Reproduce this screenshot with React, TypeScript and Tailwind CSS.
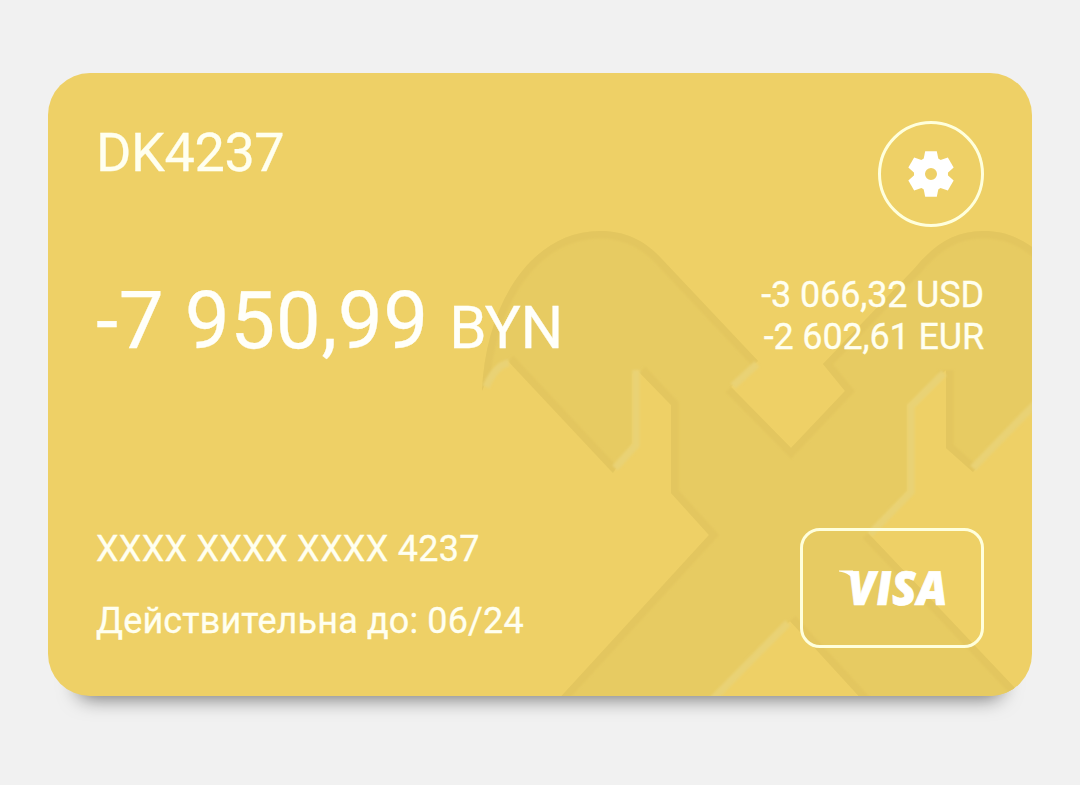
const shape =
  "M482 391 C486 303 532 231 600 231 C625 231 643 240 659 256 L758 361 L731 387 L791 448 L845 391 L823 364 L914 269 C934 245 954 231 983 231 C1004 231 1020 237 1040 253 L1040 400 L973 472 L946 448 L946 370 L907 405 L907 491 L868 533 L1030 704 L866 704 L790 621 L709 702 L556 702 L709 535 L671 493 L671 405 L637 370 L632 374 L632 443 L613 473 L508 361 C498 361 490 372 482 391 Z";

const Pattern = () => {
  return (
    <svg
      viewBox="48 73 984 623"
      className="absolute inset-0 w-full h-full"
      fill="none"
    >
      <defs>
        <clipPath id="inside">
          <path d={shape} />
        </clipPath>
        <filter id="soft">
          <feGaussianBlur stdDeviation="1" />
        </filter>
      </defs>
      <path d={shape} fill="#e7cb62" />
      <g clipPath="url(#inside)">
        <g stroke="#e3c65f" strokeWidth="15" filter="url(#soft)">
          <path d="M482 391 C486 303 532 231 600 231 C625 231 643 240 659 256 L758 361" />
          <path d="M731 387 L791 448 L845 391 L823 364 L914 269 C934 245 954 231 983 231 C1004 231 1020 237 1040 253" />
          <path d="M973 472 L946 448 L946 370" />
          <path d="M868 533 L1030 704" />
          <path d="M866 704 L790 621" />
          <path d="M556 702 L709 535 L671 493 L671 405 L640 372" />
          <path d="M613 473 L508 361" />
        </g>
      </g>
      <g stroke="#e9d274" strokeWidth="7.5" filter="url(#soft)">
        <path d="M486 387 C492 374 499 364 509 363" />
        <path d="M636 370 L636 445 L615 468" />
        <path d="M757 364 L733 386" />
        <path d="M944 373 L911 406 L911 492 L870 534" />
        <path d="M973 468 L1036 403" />
        <path d="M788 623 L712 700" />
      </g>
    </svg>
  );
};

const Gear = () => {
  return (
    <svg viewBox="-23 -23 46 46" className="w-[46px] h-[46px]" fill="#fff">
      <circle r="11.5" fill="none" stroke="#fff" strokeWidth="11" />
      {[0, 60, 120, 180, 240, 300].map((angle) => (
        <path
          key={angle}
          d="M-7.8 -13 L-5.8 -22.8 H5.8 L7.8 -13 Z"
          transform={`rotate(${angle})`}
        />
      ))}
    </svg>
  );
};

const Visa = () => {
  return (
    <svg
      viewBox="0 0 108 36"
      className="w-[108px] h-[36px] overflow-visible"
      fill="#fff"
    >
      <path d="M1 0.5 H15 L19 14 C14 6 9 2.5 1 1.5 Z" />
      <text
        x="8"
        y="34.5"
        textLength="99"
        lengthAdjust="spacingAndGlyphs"
        transform="translate(1) skewX(3)"
        stroke="#fff"
        strokeWidth="0.7"
        className="font-['Open_Sans',sans-serif] font-extrabold italic text-[47px] leading-none"
      >
        VISA
      </text>
    </svg>
  );
};

const App = () => {
  return (
    <main className="h-[785px] bg-[#f1f1f1] px-12 pt-[73px] font-['Roboto',sans-serif] text-[#fffff0]">
      <section className="relative h-[623px] rounded-[42px] bg-[#eed066] shadow-[0_32px_20px_-30px_rgba(0,0,0,0.55)]">
        <div className="absolute inset-0 overflow-hidden rounded-[42px]">
          <Pattern />
        </div>
        <div className="relative h-full flex flex-col p-12 [-webkit-text-stroke:0.3px]">
          <div className="flex justify-between items-start">
            <h1 className="text-[54px] leading-[63px] tracking-[-0.4px]">
              DK4237
            </h1>
            <button className="w-[106px] h-[106px] rounded-full border-3 border-[#ffffdc] flex justify-center items-center">
              <Gear />
            </button>
          </div>
          <div className="mt-[47px] flex justify-between items-end">
            <p className="text-[80px] leading-[72px] tracking-[0.6px] text-[#fffffa]">
              -7 950,99{" "}
              <span className="text-[60px] leading-none tracking-[-0.3px]">
                BYN
              </span>
            </p>
            <div className="text-right text-[36px] leading-[42px] tracking-[-0.15px]">
              <p>-3 066,32 USD</p>
              <p>-2 602,61 EUR</p>
            </div>
          </div>
          <div className="mt-auto flex justify-between items-start">
            <div className="text-[36px] leading-[42px] space-y-[30px]">
              <p className="tracking-[0.27px]">XXXX XXXX XXXX 4237</p>
              <p className="tracking-[0.13px]">Действительна до: 06/24</p>
            </div>
            <div className="w-[184px] h-[120px] rounded-[20px] border-3 border-[#ffffdc] flex justify-center items-center">
              <Visa />
            </div>
          </div>
        </div>
      </section>
    </main>
  );
};

export default App;
